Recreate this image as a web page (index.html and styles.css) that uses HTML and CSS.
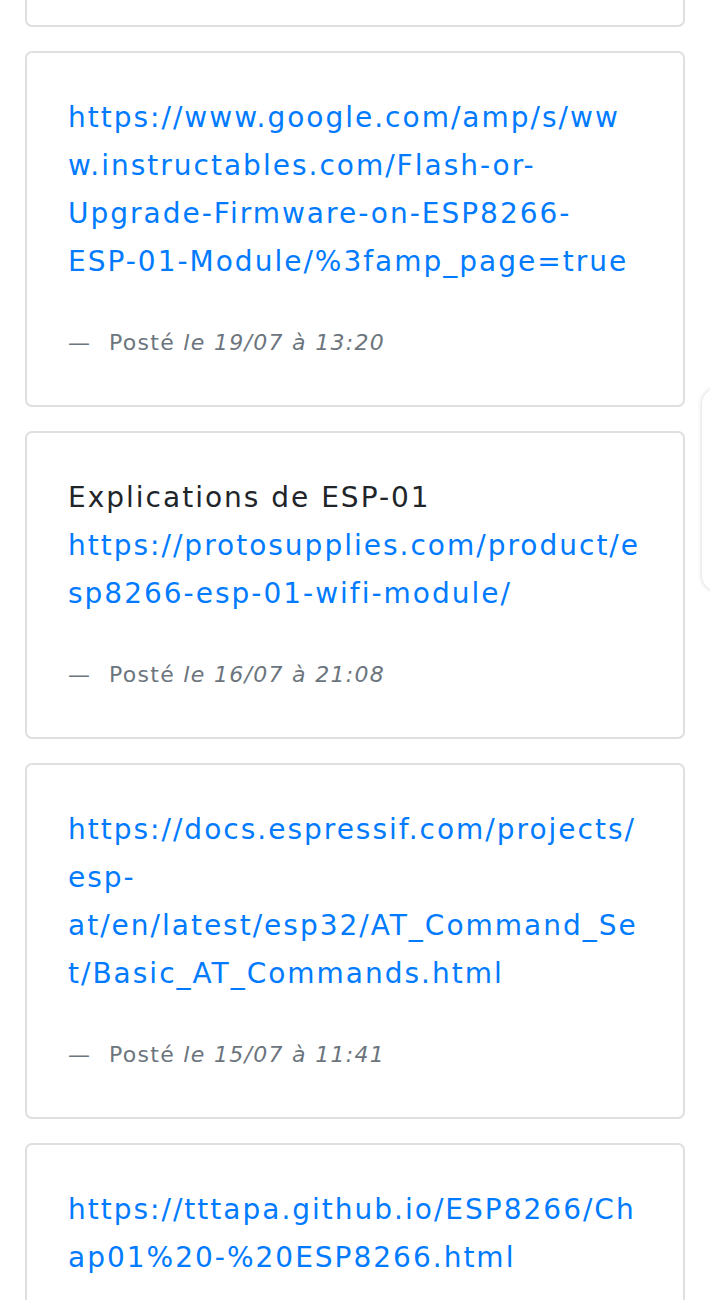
FILE: index.html
```html
<!DOCTYPE html>
<html lang="fr">
<head>
<meta charset="utf-8">
<title>Notes</title>
<link rel="stylesheet" href="styles.css">
</head>
<body>
<main class="feed">
  <article class="card card-cut"></article>

  <article class="card">
    <blockquote class="quote">
      <p class="body"><a class="link" href="#">https://www.google.com/amp/s/www.instructables.com/Flash-or-Upgrade-Firmware-on-ESP8266-ESP-01-Module/%3famp_page=true</a></p>
      <footer class="meta">Posté <em>le 19/07 à 13:20</em></footer>
    </blockquote>
  </article>

  <article class="card">
    <blockquote class="quote">
      <p class="body">Explications de ESP-01<br><a class="link" href="#">https://protosupplies.com/product/esp8266-esp-01-wifi-module/</a></p>
      <footer class="meta">Posté <em>le 16/07 à 21:08</em></footer>
    </blockquote>
  </article>

  <article class="card">
    <blockquote class="quote">
      <p class="body"><a class="link" href="#">https://docs.espressif.com/projects/esp-at/en/latest/esp32/AT_Command_Set/Basic_AT_Commands.html</a></p>
      <footer class="meta">Posté <em>le 15/07 à 11:41</em></footer>
    </blockquote>
  </article>

  <article class="card">
    <blockquote class="quote">
      <p class="body"><a class="link" href="#">https://tttapa.github.io/ESP8266/Chap01%20-%20ESP8266.html</a></p>
    </blockquote>
  </article>
</main>
<aside class="side-panel"></aside>
</body>
</html>
```

FILE: styles.css
```css
html, body {
  margin: 0;
  padding: 0;
  background: #ffffff;
}

body {
  font-family: "DejaVu Sans", "Open Sans", sans-serif;
  color: #212529;
  overflow: hidden;
}

.feed {
  display: flex;
  flex-direction: column;
  gap: 24px;
  padding: 0 25px;
  margin-top: -73px;
}

.card {
  box-sizing: border-box;
  border: 2px solid #dfdfdf;
  border-radius: 7px;
  background: #fff;
  padding: 41px 42px 45px 41px;
}

.card-cut {
  height: 100px;
  padding: 0;
}

.quote {
  margin: 0;
}

.body {
  margin: 0;
  font-size: 28px;
  line-height: 48px;
  letter-spacing: 2px;
  overflow-wrap: break-word;
}

.link {
  color: #007bff;
  text-decoration: none;
}

.meta {
  margin-top: 40px;
  font-size: 22px;
  line-height: 34px;
  letter-spacing: 1.3px;
  color: #6c757d;
}

.meta::before {
  content: "\2014\00A0";
  letter-spacing: 6px;
}

.meta em {
  font-style: italic;
}

.side-panel {
  position: fixed;
  left: 702px;
  top: 388px;
  width: 60px;
  height: 203px;
  background: #fff;
  border-radius: 16px 0 0 16px;
  box-shadow: 0 0 5px rgba(0, 0, 0, 0.18);
}
```
